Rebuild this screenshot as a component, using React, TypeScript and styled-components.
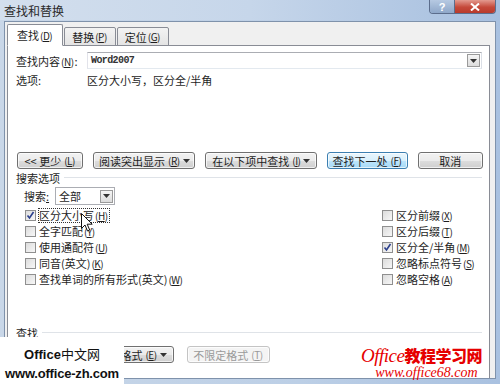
import { createGlobalStyle } from 'styled-components'
import styled from 'styled-components'

const GlobalStyle = createGlobalStyle`
  html, body {
    margin: 0;
    padding: 0;
    background: #ffffff;
  }
  body {
    font-family: "Noto Sans CJK SC", "Liberation Sans", sans-serif;
    font-size: 11px;
    color: #1e1e1e;
  }
`

type Key = { text: string; hot: string; arrow?: boolean }

const leftChecks: { label: string; hot: string; checked?: boolean }[] = [
  { label: '区分大小写', hot: 'H', checked: true },
  { label: '全字匹配', hot: 'Y' },
  { label: '使用通配符', hot: 'U' },
  { label: '同音(英文)', hot: 'K' },
  { label: '查找单词的所有形式(英文)', hot: 'W' },
]

const rightChecks: { label: string; hot: string; checked?: boolean }[] = [
  { label: '区分前缀', hot: 'X' },
  { label: '区分后缀', hot: 'T' },
  { label: '区分全/半角', hot: 'M', checked: true },
  { label: '忽略标点符号', hot: 'S' },
  { label: '忽略空格', hot: 'A' },
]

const Hot = ({ k }: { k: string }) => (
  <HotKey>
    (<u>{k}</u>)
  </HotKey>
)

const Arrow = () => (
  <svg width="7" height="4" viewBox="0 0 7 4">
    <path d="M0 0h7L3.5 4z" fill="#333" />
  </svg>
)

const Check = ({ checked }: { checked?: boolean }) => (
  <Box>
    {checked && (
      <svg width="9" height="9" viewBox="0 0 9 9">
        <path d="M1.5 4.5l2 2.5 4-6" stroke="#2b3f8c" strokeWidth="1.6" fill="none" />
      </svg>
    )}
  </Box>
)

const Btn = ({ k, wide, primary, disabled }: { k: Key; wide: number; primary?: boolean; disabled?: boolean }) => (
  <Button $w={wide} $primary={primary} $disabled={disabled}>
    {k.text}
    {k.hot && <Hot k={k.hot} />}
    {k.arrow && <Arrow />}
  </Button>
)

const App = () => (
  <Window>
    <GlobalStyle />
    <TitleBar>
      <Title>查找和替换</Title>
      <Caption>
        <HelpBtn>?</HelpBtn>
        <CloseBtn>
          <svg width="10" height="8" viewBox="0 0 10 8">
            <path d="M1 0.5l8 7M9 0.5l-8 7" stroke="#fff" strokeWidth="2" />
          </svg>
        </CloseBtn>
      </Caption>
    </TitleBar>
    <Client>
      <TabStrip>
        <Tab $active>
          查找<Hot k="D" />
        </Tab>
        <Tab>
          替换<Hot k="P" />
        </Tab>
        <Tab>
          定位<Hot k="G" />
        </Tab>
      </TabStrip>
      <Panel>
        <FieldRow>
          <Label>
            查找内容<Hot k="N" />:
          </Label>
          <Combo>
            <ComboText>Word2007</ComboText>
            <DropBtn>
              <Arrow />
            </DropBtn>
          </Combo>
        </FieldRow>
        <OptionsRow>
          <Label>选项:</Label>
          <span>区分大小写，区分全/半角</span>
        </OptionsRow>
        <ButtonRow>
          <Btn k={{ text: '<< 更少', hot: 'L' }} wide={67} />
          <Btn k={{ text: '阅读突出显示', hot: 'R', arrow: true }} wide={103} />
          <Btn k={{ text: '在以下项中查找', hot: 'I', arrow: true }} wide={113} />
          <Btn k={{ text: '查找下一处', hot: 'F' }} wide={81} primary />
          <Btn k={{ text: '取消', hot: '' }} wide={66} />
        </ButtonRow>
        <Section>
          <span>搜索选项</span>
          <Rule />
        </Section>
        <SearchRow>
          <span>
            搜索<u>:</u>
          </span>
          <SmallCombo>
            <span>全部</span>
            <DropBtn>
              <Arrow />
            </DropBtn>
          </SmallCombo>
        </SearchRow>
        <CheckGrid>
          <CheckCol>
            {leftChecks.map((c) => (
              <CheckRow key={c.label}>
                <Check checked={c.checked} />
                <CheckText $focus={c.checked}>
                  {c.label}
                  <Hot k={c.hot} />
                </CheckText>
              </CheckRow>
            ))}
          </CheckCol>
          <CheckCol>
            {rightChecks.map((c) => (
              <CheckRow key={c.label}>
                <Check checked={c.checked} />
                <CheckText>
                  {c.label}
                  <Hot k={c.hot} />
                </CheckText>
              </CheckRow>
            ))}
          </CheckCol>
        </CheckGrid>
        <Section $bottom>
          <span>查找</span>
          <Rule />
        </Section>
        <BottomRow>
          <Btn k={{ text: '特殊格式', hot: 'E', arrow: true }} wide={83} />
          <Btn k={{ text: '不限定格式', hot: 'T' }} wide={83} disabled />
        </BottomRow>
      </Panel>
    </Client>
    <Cursor>
      <svg width="12" height="19" viewBox="0 0 12 19">
        <path d="M0.5 0.5v15l3.5-3.5 2.5 6 2.2-1-2.5-5.8h5z" fill="#fff" stroke="#111" strokeWidth="1" />
      </svg>
    </Cursor>
    <MarkLeft>
      <MarkTitle>
        Office<MarkCjk>中文网</MarkCjk>
      </MarkTitle>
      <MarkUrl>www.office-zh.com</MarkUrl>
    </MarkLeft>
    <MarkRight>
      <RedTitle>
        Office<RedCjk>教程学习网</RedCjk>
      </RedTitle>
      <RedUrl>www.office68.com</RedUrl>
    </MarkRight>
  </Window>
)

const Window = styled.div`
  position: relative;
  width: 500px;
  height: 384px;
  overflow: hidden;
  display: flex;
  flex-direction: column;
  background: linear-gradient(90deg, #c9d7e8 0%, #bccfe6 60%, #a9c1e0 100%);
`

const TitleBar = styled.div`
  height: 20px;
  flex: none;
  display: flex;
  justify-content: space-between;
  align-items: flex-start;
  padding-left: 4px;
  padding-right: 4px;
  background: linear-gradient(90deg, #d3dfed 0%, #c6d6ea 50%, #a6bfdf 100%);
`

const Title = styled.div`
  padding-top: 2px;
  font-size: 12px;
  color: #2a2a2a;
`

const Caption = styled.div`
  display: flex;
  height: 13px;
  border: 1px solid #5b6d8c;
  border-top: none;
  border-radius: 0 0 4px 4px;
  overflow: hidden;
`

const HelpBtn = styled.div`
  width: 24px;
  display: flex;
  align-items: center;
  justify-content: center;
  font: bold 11px "Liberation Sans", sans-serif;
  color: #fff;
  background: linear-gradient(#b6c9e2, #8ea7c9);
  border-right: 1px solid #5b6d8c;
`

const CloseBtn = styled.div`
  width: 40px;
  display: flex;
  align-items: center;
  justify-content: center;
  background: linear-gradient(#e39a8f, #c5493a 55%, #b83a2c);
`

const Client = styled.div`
  flex: 1;
  margin: 1px 4px 5px 4px;
  border: 1px solid #7f92ab;
  background: #f0f0f0;
  display: flex;
  flex-direction: column;
  padding: 4px 4px 0 2px;
`

const TabStrip = styled.div`
  display: flex;
  align-items: flex-end;
  height: 20px;
  margin-bottom: -1px;
  position: relative;
  z-index: 1;
`

const Tab = styled.div<{ $active?: boolean }>`
  height: ${(p) => (p.$active ? 20 : 17)}px;
  padding: 0 ${(p) => (p.$active ? 9 : 7)}px;
  margin-right: 1px;
  display: flex;
  align-items: center;
  border: 1px solid #898c95;
  border-bottom: ${(p) => (p.$active ? '1px solid #ffffff' : '1px solid #898c95')};
  border-radius: 2px 2px 0 0;
  background: ${(p) => (p.$active ? '#ffffff' : 'linear-gradient(#f3f3f3, #e4e4e4)')};
`

const Panel = styled.div`
  flex: 1;
  background: #ffffff;
  border: 1px solid #898c95;
  border-bottom: none;
  margin-right: 1px;
  padding: 6px 6px 0 8px;
  display: flex;
  flex-direction: column;
`

const HotKey = styled.span`
  font-size: 10px;
  letter-spacing: -0.5px;
  margin: 0 1px;
`

const Label = styled.span`
  width: 71px;
  flex: none;
`

const FieldRow = styled.div`
  display: flex;
  align-items: center;
  height: 17px;
`

const Combo = styled.div`
  flex: 1;
  height: 15px;
  display: flex;
  align-items: center;
  justify-content: space-between;
  border: 1px solid #abadb3;
  border-color: #abadb3 #dbdfe6 #e3e9ef #e2e3ea;
  padding-left: 3px;
  margin-right: 1px;
`

const ComboText = styled.span`
  font: 10px "Liberation Mono", monospace;
  letter-spacing: -0.6px;
  font-weight: bold;
  color: #333;
`

const DropBtn = styled.div`
  width: 13px;
  height: 13px;
  margin-right: 1px;
  display: flex;
  align-items: center;
  justify-content: center;
  border: 1px solid #9a9a9a;
  box-sizing: border-box;
  background: linear-gradient(#f5f5f5, #dcdcdc);
`

const OptionsRow = styled.div`
  display: flex;
  align-items: center;
  height: 16px;
  margin-top: 3px;
`

const ButtonRow = styled.div`
  display: flex;
  gap: 10px;
  margin-top: 64px;
  margin-left: 1px;
`

const Button = styled.div<{ $w: number; $primary?: boolean; $disabled?: boolean }>`
  width: ${(p) => p.$w}px;
  height: 17px;
  box-sizing: border-box;
  display: flex;
  align-items: center;
  justify-content: center;
  gap: 2px;
  border: 1px solid ${(p) => (p.$primary ? '#3c7fb1' : p.$disabled ? '#c4c4c4' : '#707070')};
  border-radius: 3px;
  color: ${(p) => (p.$disabled ? '#9a9a9a' : '#1e1e1e')};
  background: ${(p) =>
    p.$disabled
      ? '#f4f4f4'
      : p.$primary
        ? 'linear-gradient(#eaf6fd, #d9f0fc 50%, #bee6fd 51%, #a7d9f5)'
        : 'linear-gradient(#f2f2f2, #ebebeb 50%, #dddddd 51%, #cfcfcf)'};
  box-shadow: inset 0 0 0 1px rgba(255, 255, 255, 0.7);
`

const Section = styled.div<{ $bottom?: boolean }>`
  display: flex;
  align-items: center;
  gap: 4px;
  height: 13px;
  margin-top: ${(p) => (p.$bottom ? 39 : 2)}px;
  padding-right: 1px;
`

const Rule = styled.div`
  flex: 1;
  height: 1px;
  background: #dfe3e8;
`

const SearchRow = styled.div`
  display: flex;
  align-items: center;
  gap: 6px;
  margin-top: 3px;
  padding-left: 8px;
`

const SmallCombo = styled.div`
  width: 60px;
  height: 18px;
  box-sizing: border-box;
  display: flex;
  align-items: center;
  justify-content: space-between;
  padding-left: 3px;
  border: 1px solid #abadb3;
`

const CheckGrid = styled.div`
  display: grid;
  grid-template-columns: 357px 1fr;
  margin-top: 2px;
  padding-left: 9px;
`

const CheckCol = styled.div`
  display: flex;
  flex-direction: column;
`

const CheckRow = styled.div`
  display: flex;
  align-items: center;
  gap: 3px;
  height: 16px;
`

const Box = styled.div`
  width: 11px;
  height: 11px;
  box-sizing: border-box;
  border: 1px solid #8f8f8f;
  background: linear-gradient(135deg, #dcdcdc, #f7f7f7);
  display: flex;
  align-items: center;
  justify-content: center;
`

const CheckText = styled.span<{ $focus?: boolean }>`
  outline: ${(p) => (p.$focus ? '1px dotted #333' : 'none')};
  line-height: 13px;
`

const BottomRow = styled.div`
  display: flex;
  gap: 13px;
  margin-top: 7px;
  margin-left: 75px;
`

const Cursor = styled.div`
  position: absolute;
  left: 81px;
  top: 213px;
  width: 12px;
  height: 19px;
`

const MarkLeft = styled.div`
  position: absolute;
  left: 0;
  top: 337px;
  width: 124px;
  height: 47px;
  background: #ffffff;
  display: flex;
  flex-direction: column;
  align-items: center;
  font-family: "Liberation Sans", Arial, sans-serif;
  font-weight: bold;
  color: #111;
`

const MarkTitle = styled.div`
  margin-top: 9px;
  font-size: 13px;
  line-height: 15px;
`

const MarkCjk = styled.span`
  font-family: "Noto Sans CJK SC", sans-serif;
  font-weight: normal;
`

const MarkUrl = styled.div`
  margin-top: 4px;
  font-size: 13px;
  line-height: 15px;
  letter-spacing: -0.2px;
`

const MarkRight = styled.div`
  position: absolute;
  left: 361px;
  top: 345px;
  display: flex;
  flex-direction: column;
  align-items: center;
  color: #e60000;
`

const RedTitle = styled.div`
  font-family: "Liberation Serif", serif;
  font-style: italic;
  font-size: 19px;
  line-height: 21px;
  letter-spacing: -0.5px;
`

const RedCjk = styled.span`
  font-family: "Noto Sans CJK SC", sans-serif;
  font-style: normal;
  font-weight: 900;
  font-size: 16px;
`

const RedUrl = styled.div`
  font-family: "Liberation Serif", serif;
  font-style: italic;
  font-size: 14px;
  line-height: 14px;
  margin-left: 10px;
`

export default App
